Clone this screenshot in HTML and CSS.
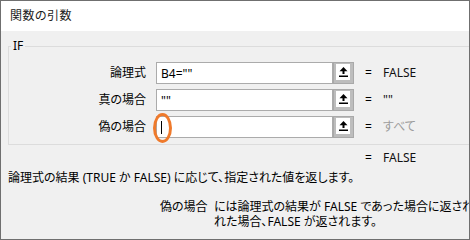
FILE: index.html
```html
<!DOCTYPE html>
<html lang="ja">
<head>
<meta charset="utf-8">
<title>関数の引数</title>
<link rel="stylesheet" href="styles.css">
</head>
<body>
<div class="window">
  <div class="titlebar">関数の引数</div>
  <div class="content">
    <fieldset class="group">
      <legend class="group-title">IF</legend>
      <div class="args">
        <div class="arg-label">論理式</div>
        <div class="arg-input">B4=""</div>
        <div class="ref-btn"><span class="ref-inner"><svg class="ref-icon" width="9" height="10" viewBox="0 0 9 10"><polygon points="4.5,0 0.5,4.2 8.5,4.2" fill="#000"/><rect x="3.5" y="4" width="2" height="3" fill="#000"/><rect x="0" y="8.5" width="9" height="1.5" fill="#000"/></svg></span></div>
        <div class="arg-eq">=</div>
        <div class="arg-value">FALSE</div>

        <div class="arg-label">真の場合</div>
        <div class="arg-input">""</div>
        <div class="ref-btn"><span class="ref-inner"><svg class="ref-icon" width="9" height="10" viewBox="0 0 9 10"><polygon points="4.5,0 0.5,4.2 8.5,4.2" fill="#000"/><rect x="3.5" y="4" width="2" height="3" fill="#000"/><rect x="0" y="8.5" width="9" height="1.5" fill="#000"/></svg></span></div>
        <div class="arg-eq">=</div>
        <div class="arg-value">""</div>

        <div class="arg-label">偽の場合</div>
        <div class="arg-input focused"><span class="caret"></span><span class="highlight"></span></div>
        <div class="ref-btn"><span class="ref-inner"><svg class="ref-icon" width="9" height="10" viewBox="0 0 9 10"><polygon points="4.5,0 0.5,4.2 8.5,4.2" fill="#000"/><rect x="3.5" y="4" width="2" height="3" fill="#000"/><rect x="0" y="8.5" width="9" height="1.5" fill="#000"/></svg></span></div>
        <div class="arg-eq">=</div>
        <div class="arg-value muted">すべて</div>
      </div>
    </fieldset>

    <div class="args result">
      <div></div><div></div><div></div>
      <div class="arg-eq">=</div>
      <div class="arg-value">FALSE</div>
    </div>

    <p class="desc">論理式の結果 (TRUE か FALSE) に応じて、指定された値を返します。</p>

    <div class="help">
      <div class="help-name">偽の場合</div>
      <div class="help-text">
        <div class="help-line">には論理式の結果が FALSE であった場合に返される値を指定します。</div>
        <div class="help-line">れた場合、FALSE が返されます。</div>
      </div>
    </div>
  </div>
</div>
</body>
</html>
```

FILE: styles.css
```css
* { box-sizing: border-box; }

html, body {
  margin: 0;
  padding: 0;
  background: #f0f0f0;
}

body {
  font-family: "Noto Sans", "Noto Sans CJK JP", sans-serif;
  font-size: 12px;
  color: #000;
  font-feature-settings: "palt";
}

.window {
  width: 470px;
  height: 240px;
  border: 1px solid #6f6f6f;
  overflow: hidden;
  background: #f0f0f0;
  display: flex;
  flex-direction: column;
}

.titlebar {
  height: 30px;
  line-height: 30px;
  padding-left: 9px;
  background: #fff;
  font-size: 12px;
  color: #1a1a1a;
  flex: none;
  letter-spacing: 0.5px;
}

.content {
  flex: 1;
  overflow: hidden;
  padding-top: 9px;
}

.group {
  margin: 0 0 0 7px;
  width: 540px;
  padding: 10px 0 6px 0;
  border: 1px solid #dcdcdc;
  min-width: 0;
}

.group-title {
  margin-left: 2px;
  padding: 0 2px;
  font-size: 12px;
  line-height: 12px;
  height: 12px;
}

.args {
  display: grid;
  grid-template-columns: 147px 177px 21px 29px 120px;
  grid-auto-rows: 22px;
  row-gap: 5px;
  align-items: center;
}

.arg-label {
  text-align: right;
  padding-right: 10px;
  line-height: 22px;
  white-space: nowrap;
}

.arg-input {
  position: relative;
  height: 22px;
  background: #fff;
  border: 1px solid #ababab;
  padding-left: 4px;
  line-height: 19px;
  white-space: nowrap;
  display: flex;
  align-items: center;
}

.caret {
  display: block;
  width: 1px;
  height: 13px;
  background: #000;
}

.highlight {
  position: absolute;
  left: -4px;
  top: -4px;
  width: 19px;
  height: 30px;
  border: 3px solid #ef7a2c;
  border-radius: 50%;
}

.ref-btn {
  height: 22px;
  background: #bdbdbd;
  border: 1px solid #a9a9a9;
  padding: 1px 3px 3px 2px;
  display: flex;
}

.ref-inner {
  flex: 1;
  background: #fff;
  display: flex;
  align-items: center;
  justify-content: center;
  padding-bottom: 1px;
}

.ref-icon { display: block; }

.arg-eq {
  padding-left: 11px;
  line-height: 22px;
}

.arg-value {
  line-height: 22px;
  white-space: nowrap;
  color: #111;
}

.arg-value.muted { color: #9c9c9c; }

.result {
  margin: 5px 0 0 8px;
  grid-auto-rows: 16px;
}

.result .arg-eq, .result .arg-value { line-height: 16px; }

.desc {
  margin: 4px 0 0 7px;
  line-height: 16px;
  white-space: nowrap;
}

.help {
  display: flex;
  margin: 13px 0 0 159px;
  line-height: 15px;
  white-space: nowrap;
}

.help-name {
  width: 54px;
  flex: none;
}

.help-line { white-space: nowrap; }
```
